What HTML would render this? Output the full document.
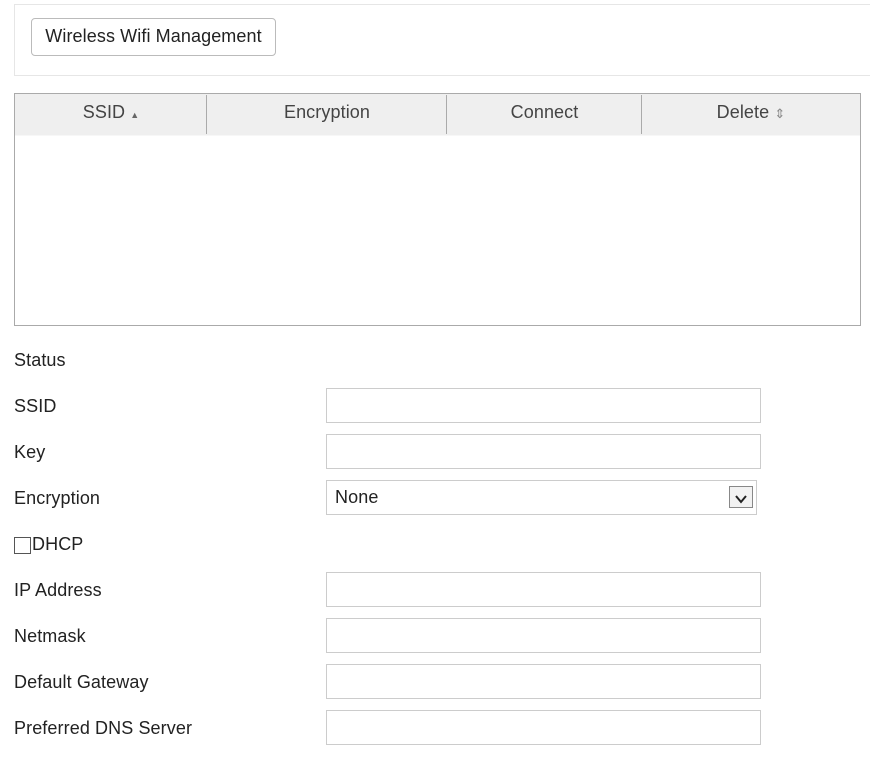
<!DOCTYPE html>
<html><head><style>
body{margin:0;width:870px;height:758px;background:#fff;font-family:"Liberation Sans",sans-serif;font-size:18px;letter-spacing:0.1px;color:#222;position:relative;overflow:hidden}
.a{position:absolute}
.top{left:14px;top:4px;width:870px;height:70px;border:1px solid #e6e6e6;border-right:none}
.btn{left:31px;top:18px;width:243px;height:36px;border:1px solid #bbb;border-radius:4px;background:#fff;line-height:35px;text-align:center;color:#222}
.tbl{left:14px;top:93px;width:845px;height:231px;border:1px solid #aaa}
.hd{left:0;top:0;width:845px;height:41px;background:#efefef;border-bottom:1px solid #f7f7f7}
.hd div{position:absolute;top:0;height:41px;line-height:36px;text-align:center;color:#444}
.sep{position:absolute;top:1px;width:1px;height:39px;background:#aaa}
.lbl{left:14px;line-height:20px}
.in{left:326px;width:433px;height:33px;border:1px solid #ccc;background:#fff}
</style></head><body>
<div class="a top"></div>
<div class="a btn">Wireless Wifi Management</div>
<div class="a tbl">
 <div class="a hd">
  <div style="left:0;width:192px">SSID <span style="font-size:9px;color:#666">&#9650;</span></div>
  <span class="sep" style="left:191px"></span>
  <div style="left:192px;width:240px">Encryption</div>
  <span class="sep" style="left:431px"></span>
  <div style="left:432px;width:195px">Connect</div>
  <span class="sep" style="left:626px"></span>
  <div style="left:627px;width:218px">Delete <span style="font-size:13px;color:#888">&#8661;</span></div>
 </div>
</div>
<div class="a lbl" style="top:350px">Status</div>
<div class="a lbl" style="top:396px">SSID</div><div class="a in" style="top:388px"></div>
<div class="a lbl" style="top:442px">Key</div><div class="a in" style="top:434px"></div>
<div class="a lbl" style="top:488px">Encryption</div>
<div class="a in" style="top:480px;width:429px;line-height:33px"><span style="margin-left:8px">None</span>
 <div class="a" style="right:3px;top:5px;width:22px;height:20px;border:1px solid #888;background:#f2f2f2">
  <svg width="22" height="20"><path d="M6 7 L11 13 L16 7" stroke="#222" stroke-width="2" fill="none"/></svg></div></div>
<div class="a" style="left:14px;top:537px;width:15px;height:15px;border:1px solid #555"></div>
<div class="a" style="left:32px;top:534px;line-height:20px">DHCP</div>
<div class="a lbl" style="top:580px">IP Address</div><div class="a in" style="top:572px"></div>
<div class="a lbl" style="top:626px">Netmask</div><div class="a in" style="top:618px"></div>
<div class="a lbl" style="top:672px">Default Gateway</div><div class="a in" style="top:664px"></div>
<div class="a lbl" style="top:718px">Preferred DNS Server</div><div class="a in" style="top:710px"></div>
</body></html>
